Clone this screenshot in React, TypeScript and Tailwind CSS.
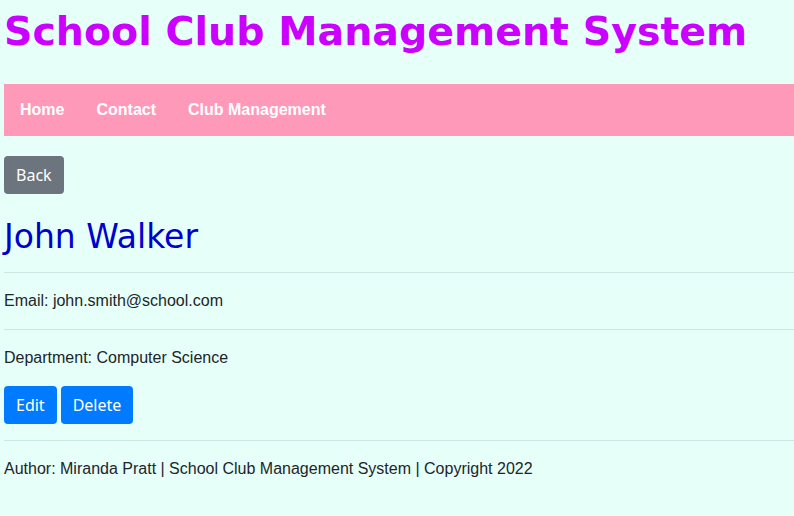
import React from "react";

export default function App() {
  const body = { fontFamily: '"Liberation Sans", Arial, sans-serif' };
  const btn = { fontFamily: '"Noto Sans", "Open Sans", sans-serif' };
  return (
    <div className="min-h-[516px] bg-[#e6fff9] pl-1 text-[#212529]" style={body}>
      <h1
        className="pt-[7px] text-[39.5px] font-bold leading-[48px] text-[#cc00ff]"
        style={{ fontFamily: '"DejaVu Sans", Verdana, sans-serif' }}
      >
        School Club Management System
      </h1>
      <nav className="mt-[29px] flex h-[52px] items-center bg-[#ff99b9]">
        <a className="px-4 text-base font-bold text-white">Home</a>
        <a className="px-4 text-base font-bold text-white">Contact</a>
        <a className="px-4 text-base font-bold text-white">Club Management</a>
      </nav>
      <div className="mt-[20px]">
        <button
          className="h-[38px] rounded bg-[#6c757d] px-3 text-[16px] text-white"
          style={btn}
        >
          Back
        </button>
      </div>
      <h2
        className="mt-[23px] mb-2 text-[33px] leading-[39px] text-[#0000cd]"
        style={{ fontFamily: '"DejaVu Sans", Verdana, sans-serif' }}
      >
        John Walker
      </h2>
      <hr className="my-4 border-t border-[#cfe5e0]" />
      <p className="mb-4 text-base leading-6">Email: john.smith@school.com</p>
      <hr className="my-4 border-t border-[#cfe5e0]" />
      <p className="mb-4 text-base leading-6">Department: Computer Science</p>
      <div className="flex gap-1">
        <button className="h-[38px] rounded bg-[#007bff] px-3 text-[16px] text-white" style={btn}>
          Edit
        </button>
        <button className="h-[38px] rounded bg-[#007bff] px-3 text-[16px] text-white" style={btn}>
          Delete
        </button>
      </div>
      <hr className="my-4 border-t border-[#cfe5e0]" />
      <p className="text-base leading-6">
        Author: Miranda Pratt | School Club Management System | Copyright 2022
      </p>
    </div>
  );
}
